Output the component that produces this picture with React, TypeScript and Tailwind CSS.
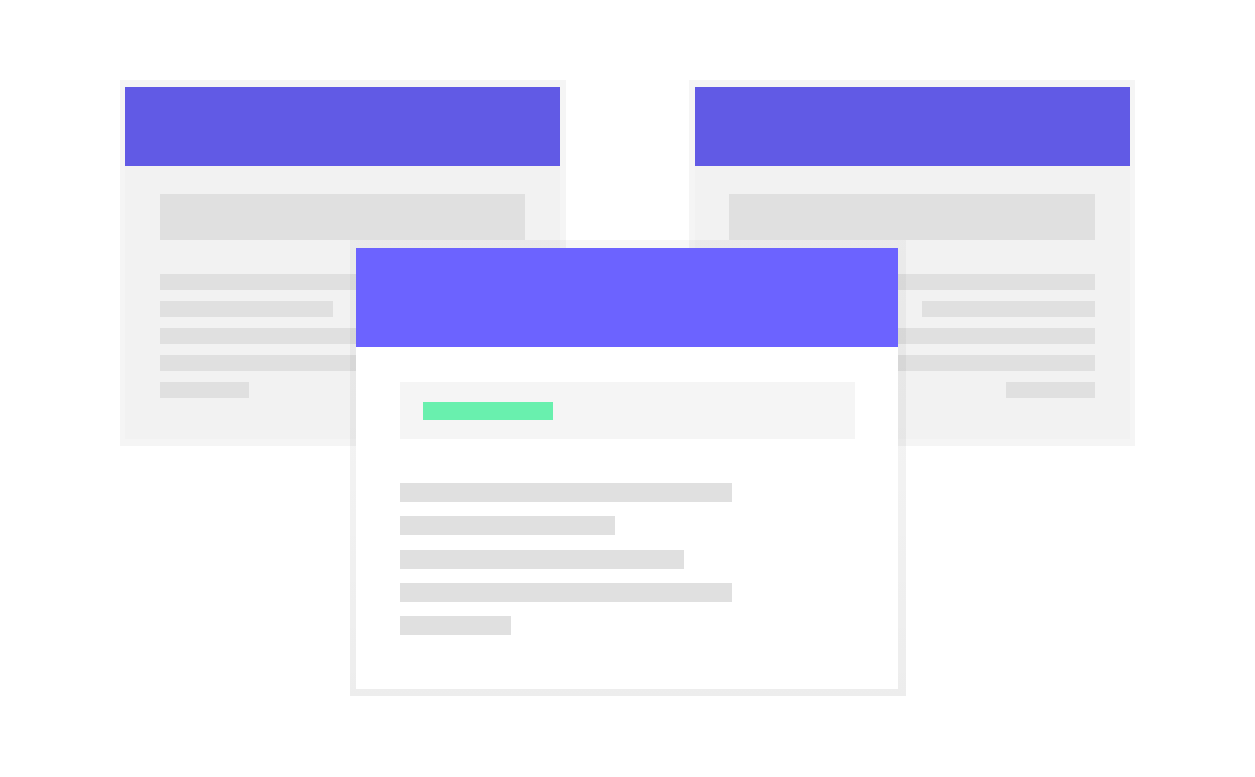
import React from "react";

function BackCard({ left, align }: { left: number; align: "start" | "end" }) {
  const isStart = align === "start";
  return (
    <div
      className={`absolute top-[80px] w-[446px] h-[366px] bg-[#f5f5f5] pt-[7px] pb-[7px] flex flex-col ${
        isStart ? "pl-[5px] pr-[6px]" : "pl-[6px] pr-[5px]"
      }`}
      style={{ left }}
    >
      <div className="h-[79px] bg-[#615ae5] shrink-0" />
      <div
        className={`flex-1 bg-[#f2f2f2] pr-[35px] pt-[28px] flex flex-col ${
          isStart ? "pl-[35px]" : "pl-[34px]"
        }`}
      >
        <div className="h-[46px] bg-[#e0e0e0]" />
        <div className={`mt-[34px] flex flex-col gap-[11px] ${isStart ? "items-start" : "items-end"}`}>
          <div className="h-[16px] w-full bg-[#e0e0e0]" />
          <div className="h-[16px] w-[173px] bg-[#e0e0e0]" />
          <div className="h-[16px] w-full bg-[#e0e0e0]" />
          <div className="h-[16px] w-full bg-[#e0e0e0]" />
          <div className="h-[16px] w-[89px] bg-[#e0e0e0]" />
        </div>
      </div>
    </div>
  );
}

function FrontCard() {
  return (
    <div className="absolute left-[350px] top-[240px] w-[556px] h-[456px] bg-linear-to-b from-[rgba(0,0,0,0.03)] to-[rgba(0,0,0,0.07)] pl-[6px] pr-[8px] pt-[8px] pb-[7px] flex flex-col">
      <div className="h-[99px] bg-[#6c63ff] shrink-0" />
      <div className="flex-1 bg-white pl-[44px] pr-[43px] pt-[35px] flex flex-col">
        <div className="h-[57px] bg-[#f5f5f5] flex items-center pl-[23px]">
          <div className="h-[18px] w-[130px] bg-[#69f0ae]" />
        </div>
        <div className="mt-[44px] flex flex-col gap-[14.25px]">
          <div className="h-[19px] w-[332px] bg-[#e0e0e0]" />
          <div className="h-[19px] w-[215px] bg-[#e0e0e0]" />
          <div className="h-[19px] w-[284px] bg-[#e0e0e0]" />
          <div className="h-[19px] w-[332px] bg-[#e0e0e0]" />
          <div className="h-[19px] w-[111px] bg-[#e0e0e0]" />
        </div>
      </div>
    </div>
  );
}

export default function App() {
  return (
    <div className="w-[1255px] h-[777px] bg-white relative overflow-hidden">
      <BackCard left={120} align="start" />
      <BackCard left={689} align="end" />
      <FrontCard />
    </div>
  );
}
